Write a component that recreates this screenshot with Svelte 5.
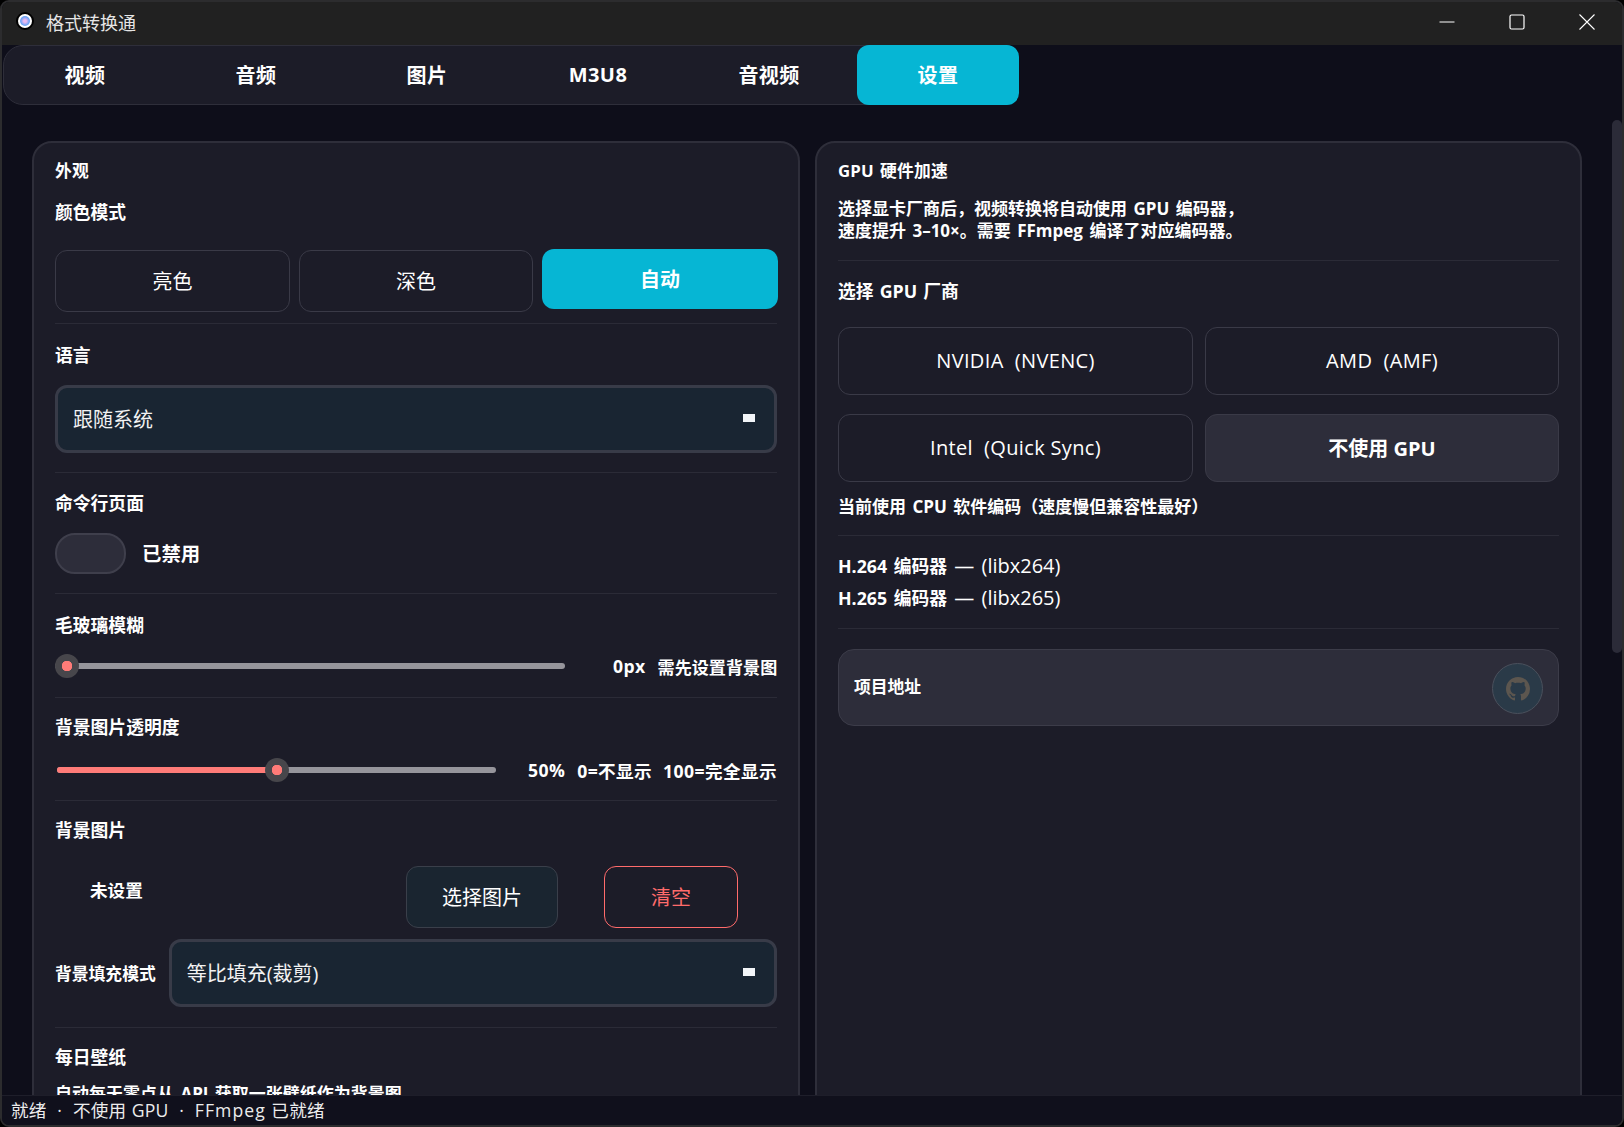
<script lang="ts">
	const tabs = ['视频', '音频', '图片', 'M3U8', '音视频', '设置'];
	const modes = ['亮色', '深色', '自动'];
	const vendors = [
		{ label: 'NVIDIA\u00a0\u00a0(NVENC)', on: false },
		{ label: 'AMD\u00a0\u00a0(AMF)', on: false },
		{ label: 'Intel\u00a0\u00a0(Quick Sync)', on: false },
		{ label: '不使用 GPU', on: true }
	];
</script>

<div class="window">
	<header class="titlebar">
		<span class="appicon"><span class="dot"></span></span>
		<span class="apptitle">格式转换通</span>
		<div class="controls">
			<svg width="16" height="16" viewBox="0 0 16 16"><path d="M0.5 8h15" stroke="#fff" stroke-width="1" /></svg>
			<svg width="16" height="16" viewBox="0 0 16 16"><rect x="1" y="1" width="14" height="14" rx="1.5" fill="none" stroke="#fff" stroke-width="1.2" /></svg>
			<svg width="16" height="16" viewBox="0 0 16 16"><path d="M0.5 0.5l15 15M15.5 0.5l-15 15" stroke="#fff" stroke-width="1.1" /></svg>
		</div>
	</header>

	<main class="page">
		<nav class="tabs">
			{#each tabs as t, i}
				<div class="tab" class:active={i === 5}>{t}</div>
			{/each}
		</nav>

		<div class="columns">
			<section class="card">
				<h2>外观</h2>
				<h3 class="first">颜色模式</h3>
				<div class="modes">
					{#each modes as m, i}
						<button class="btn" class:primary={i === 2}>{m}</button>
					{/each}
				</div>
				<hr class="d1" />

				<h3>语言</h3>
				<div class="select lang"><span>跟随系统</span><i></i></div>
				<hr class="d2" />

				<h3>命令行页面</h3>
				<div class="switchrow">
					<div class="switch"></div>
					<b>已禁用</b>
				</div>
				<hr class="d3" />

				<h3>毛玻璃模糊</h3>
				<div class="sliderrow blur">
					<div class="slider"><span class="thumb" style="left: 0"></span></div>
					<b class="val">0px</b>
					<b class="hint">需先设置背景图</b>
				</div>
				<hr class="d4" />

				<h3>背景图片透明度</h3>
				<div class="sliderrow opacity">
					<div class="slider">
						<span class="fill" style="width: 50%"></span>
						<span class="thumb" style="left: calc(50% - 12px)"></span>
					</div>
					<b class="val">50%</b>
					<b>0=不显示</b>
					<b>100=完全显示</b>
				</div>
				<hr class="d4 second" />

				<h3>背景图片</h3>
				<div class="bgrow">
					<b>未设置</b>
					<button class="pick">选择图片</button>
					<button class="clear">清空</button>
				</div>
				<div class="fillrow">
					<b>背景填充模式</b>
					<div class="select"><span>等比填充(裁剪)</span><i></i></div>
				</div>
				<hr class="d5" />

				<h3>每日壁纸</h3>
				<p class="clip">自动每天零点从 API 获取一张壁纸作为背景图</p>
			</section>

			<section class="card right">
				<h2>GPU 硬件加速</h2>
				<p class="intro">选择显卡厂商后，视频转换将自动使用 GPU 编码器，<br />速度提升 3–10×。需要 FFmpeg 编译了对应编码器。</p>
				<hr class="r1" />
				<h3>选择 GPU 厂商</h3>
				<div class="vendors">
					{#each vendors as v}
						<button class="vendor" class:on={v.on}>{v.label}</button>
					{/each}
				</div>
				<p class="current">当前使用 CPU 软件编码（速度慢但兼容性最好）</p>
				<hr class="r2" />
				<div class="codec"><b>H.264 编码器</b> — (libx264)</div>
				<div class="codec"><b>H.265 编码器</b> — (libx265)</div>
				<hr class="r3" />
				<div class="project">
					<b>项目地址</b>
					<span class="gh">
						<svg width="24" height="24" viewBox="0 0 16 16" fill="#5c564f">
							<path d="M8 0C3.58 0 0 3.58 0 8c0 3.54 2.29 6.53 5.47 7.59.4.07.55-.17.55-.38 0-.19-.01-.82-.01-1.49-2.01.37-2.53-.49-2.69-.94-.09-.23-.48-.94-.82-1.13-.28-.15-.68-.52-.01-.53.63-.01 1.08.58 1.23.82.72 1.21 1.87.87 2.33.66.07-.52.28-.87.51-1.07-1.78-.2-3.64-.89-3.64-3.95 0-.87.31-1.59.82-2.15-.08-.2-.36-1.02.08-2.12 0 0 .67-.21 2.2.82.64-.18 1.32-.27 2-.27s1.36.09 2 .27c1.53-1.04 2.2-.82 2.2-.82.44 1.1.16 1.92.08 2.12.51.56.82 1.27.82 2.15 0 3.07-1.87 3.75-3.65 3.95.29.25.54.73.54 1.48 0 1.07-.01 1.93-.01 2.2 0 .21.15.46.55.38A8.01 8.01 0 0 0 16 8c0-4.42-3.58-8-8-8z" />
						</svg>
					</span>
				</div>
			</section>
		</div>
		<div class="scrollthumb"></div>
	</main>

	<footer class="status">就绪 &nbsp;·&nbsp; 不使用 GPU &nbsp;·&nbsp; <span class="wide">FFmpeg</span> 已就绪</footer>
</div>

<style>
	:global(body) {
		margin: 0;
		background: #000;
		overflow: hidden;
	}

	.window {
		box-sizing: border-box;
		width: 1624px;
		height: 1127px;
		display: flex;
		flex-direction: column;
		border: 2px solid #2c2c2e;
		border-radius: 9px;
		overflow: hidden;
		background: #0e0e1a;
		color: #fff;
		font-family: 'Open Sans', 'Noto Sans CJK SC', sans-serif;
	}

	.titlebar {
		flex: none;
		box-sizing: border-box;
		height: 43px;
		display: flex;
		align-items: center;
		background: #212121;
		padding: 0 0 3px 14px;
	}

	.appicon {
		width: 18px;
		height: 18px;
		margin-top: -2px;
		border-radius: 50%;
		background: #fff;
		border: 2px solid #000;
		box-sizing: border-box;
		display: grid;
		place-items: center;
	}

	.dot {
		width: 10px;
		height: 10px;
		border-radius: 50%;
		background: radial-gradient(#e8b8f0 20%, #6ea4f6 60%);
	}

	.apptitle {
		margin-left: 12px;
		font-size: 18px;
		color: #e6e6e6;
	}

	.controls {
		margin-left: auto;
		display: flex;
		gap: 54px;
		padding-right: 27px;
	}

	.page {
		flex: 1;
		min-height: 0;
		position: relative;
		overflow: hidden;
	}

	.tabs {
		width: fit-content;
		display: flex;
		gap: 9px;
		margin-left: 1px;
		background: #1c1c28;
		border: 1px solid #2e2e3a;
		border-radius: 20px;
		box-sizing: border-box;
		height: 60px;
	}

	.tab {
		box-sizing: border-box;
		width: 162px;
		display: grid;
		place-items: center;
		padding-bottom: 2px;
		font-size: 20px;
		font-weight: 700;
		letter-spacing: 0.4px;
	}

	.tab.active {
		background: #06b6d4;
		border-radius: 12px;
		height: 60px;
		margin: -1px -1px 0 -2px;
	}

	.columns {
		display: flex;
		gap: 15px;
		padding: 36px 0 0 30px;
		align-items: flex-start;
	}

	.card {
		box-sizing: border-box;
		width: 768px;
		height: 1000px;
		flex: none;
		background: #1c1c28;
		border: 2px solid #2e2e3a;
		border-radius: 20px;
		padding: 15px 21px 0;
	}

	.card.right {
		width: 767px;
	}

	h2 {
		margin: 0;
		font-size: 16.8px;
		line-height: 26px;
		font-weight: 700;
		word-spacing: 1.5px;
		letter-spacing: 0.2px;
	}

	h3 {
		margin: 0;
		font-size: 17.8px;
		line-height: 26px;
		font-weight: 700;
		word-spacing: 1.5px;
	}

	h3.first {
		margin-top: 15px;
	}

	hr {
		border: 0;
		height: 1px;
		background: #2b2b37;
		margin: 0;
	}

	b {
		font-size: 17.6px;
		font-weight: 700;
		white-space: nowrap;
	}

	button {
		font-family: inherit;
		color: #fff;
		background: transparent;
		cursor: pointer;
		padding: 0 0 2px;
	}

	.modes {
		display: grid;
		grid-template-columns: 235px 234px 236px;
		gap: 9px;
		align-items: start;
		margin-top: 24px;
	}

	.btn {
		height: 62px;
		margin-top: 1px;
		font-size: 20px;
		border: 1px solid #3a3a47;
		border-radius: 12px;
	}

	.btn.primary {
		height: 60px;
		margin-top: 0;
		border: 0;
		font-weight: 700;
		background: #06b6d4;
	}

	.d1 {
		margin: 11px 0 18px;
	}

	.select {
		flex: 1;
		box-sizing: border-box;
		height: 68px;
		display: flex;
		align-items: center;
		justify-content: space-between;
		padding: 0 19px 2px 15px;
		background: #192532;
		border: 3px solid #383b48;
		border-radius: 12px;
		font-size: 20px;
		color: #f2f2f2;
	}

	.select i {
		width: 12px;
		height: 8px;
		background: #f2f5f8;
	}

	.lang {
		margin-top: 17px;
	}

	.d2 {
		margin: 19px 0 17px;
	}

	.switchrow {
		display: flex;
		align-items: center;
		gap: 16px;
		margin-top: 17px;
	}

	.switch {
		box-sizing: border-box;
		width: 71px;
		height: 41px;
		background: #2d2d3a;
		border: 2px solid #3f3f4c;
		border-radius: 20px;
	}

	.switchrow b {
		font-size: 19.4px;
		margin-top: -2px;
	}

	.d3 {
		margin: 19px 0 18px;
	}

	.sliderrow {
		display: flex;
		align-items: center;
		height: 30px;
	}

	.sliderrow.blur {
		margin-top: 13px;
	}

	.sliderrow.opacity {
		margin-top: 15px;
	}

	.slider {
		flex: none;
		position: relative;
		height: 6px;
		border-radius: 3px;
		background: #96959c;
	}

	.fill {
		position: absolute;
		left: 0;
		top: 0;
		bottom: 0;
		background: #ff7b78;
		border-radius: 3px;
	}

	.thumb {
		position: absolute;
		top: -9px;
		width: 24px;
		height: 24px;
		border-radius: 50%;
		background: radial-gradient(#ff7b78 0 5px, #47464b 5.5px);
	}

	.blur .slider {
		width: 510px;
		margin-right: 48px;
	}

	.blur .val {
		margin-right: 12px;
		letter-spacing: 0.4px;
	}

	.hint {
		font-size: 17.1px;
	}

	.opacity .slider {
		width: 439px;
		margin: 0 32px 0 2px;
	}

	.opacity b {
		letter-spacing: 0.4px;
	}

	.opacity .val {
		margin-right: 12px;
	}

	.opacity b + b {
		margin-right: 11px;
	}

	.opacity b:last-child {
		margin-right: 0;
	}

	.d4 {
		margin: 16px 0 16px;
	}

	.d4.second {
		margin-top: 15px;
	}

	.bgrow {
		display: flex;
		align-items: center;
		height: 62px;
		margin-top: 23px;
		padding-left: 35px;
	}

	.bgrow b {
		width: 316px;
		margin-top: -16px;
	}

	.pick {
		width: 152px;
		height: 62px;
		font-size: 20px;
		background: #1a2530;
		border: 1px solid #3a3f4a;
		border-radius: 12px;
	}

	.clear {
		width: 134px;
		height: 62px;
		margin-left: 46px;
		font-size: 20px;
		color: #ff6b6b;
		border: 1px solid #ff6b6b;
		border-radius: 12px;
	}

	.fillrow {
		display: flex;
		align-items: center;
		gap: 13px;
		margin-top: 11px;
	}

	.fillrow b {
		font-size: 16.8px;
	}

	.d5 {
		margin: 20px 0 16px;
	}

	p {
		margin: 0;
		font-size: 17px;
		font-weight: 700;
		word-spacing: 2px;
	}

	.clip {
		margin-top: 10px;
	}

	.intro {
		margin-top: 14px;
		line-height: 22px;
	}

	.r1 {
		margin: 18px 0 17px;
	}

	.vendors {
		display: grid;
		grid-template-columns: 355px 354px;
		grid-auto-rows: 68px;
		gap: 19px 12px;
		margin-top: 23px;
	}

	.vendor {
		font-size: 20px;
		letter-spacing: 0.35px;
		border: 1px solid #3a3a47;
		border-radius: 12px;
	}

	.vendor.on {
		background: #2d2d3a;
		font-weight: 700;
		letter-spacing: 0;
	}

	.current {
		margin-top: 12px;
		line-height: 26px;
	}

	.r2 {
		margin: 15px 0 14px;
	}

	.codec {
		font-size: 20px;
		line-height: 31px;
		word-spacing: 2px;
	}

	.codec b {
		font-size: 17.8px;
	}

	.r3 {
		margin: 14px 0 20px;
	}

	.project {
		box-sizing: border-box;
		height: 77px;
		display: flex;
		align-items: center;
		justify-content: space-between;
		padding: 0 15px 0 15px;
		background: #2d2d3a;
		border: 1px solid #3c3c49;
		border-radius: 16px;
	}

	.project b {
		font-size: 16.8px;
		margin-top: -3px;
	}

	.gh {
		box-sizing: border-box;
		width: 51px;
		height: 51px;
		margin-top: 2px;
		display: grid;
		place-items: center;
		border-radius: 50%;
		background: #2a3a48;
		border: 1px solid #4a505c;
	}

	.scrollthumb {
		position: absolute;
		right: 0;
		top: 75px;
		width: 10px;
		height: 533px;
		border-radius: 5px;
		background: #2b2b38;
	}

	.status {
		flex: none;
		height: 29px;
		line-height: 28px;
		padding-left: 9px;
		font-size: 17.6px;
		letter-spacing: 0.2px;
		word-spacing: 0.6px;
		background: #10101c;
		border-top: 1px solid #1e1e2a;
		color: #ececec;
	}

	.wide {
		letter-spacing: 1.1px;
	}
</style>
